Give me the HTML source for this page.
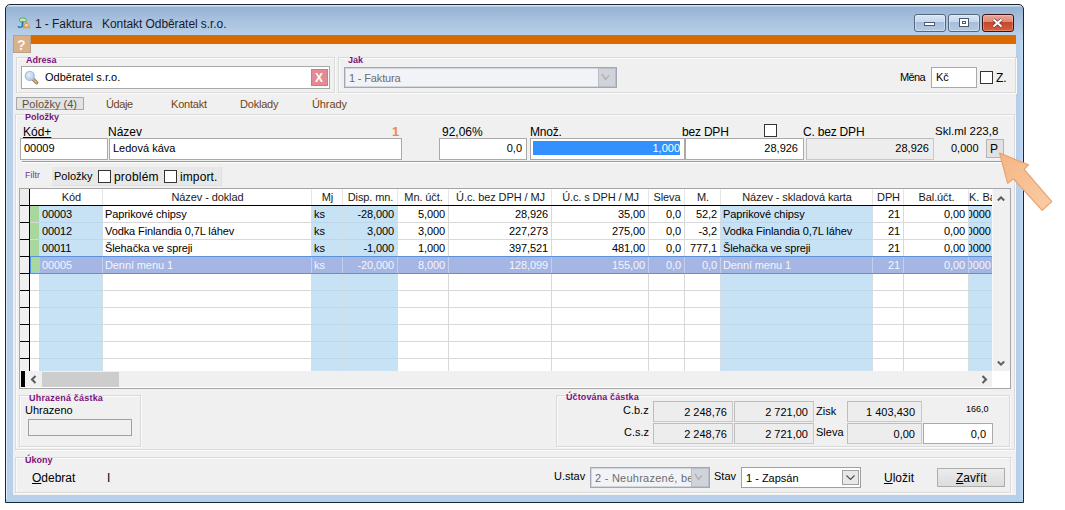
<!DOCTYPE html>
<html><head><meta charset="utf-8">
<style>
*{margin:0;padding:0;box-sizing:border-box}
html,body{width:1065px;height:510px;overflow:hidden;background:#fff;font-family:"Liberation Sans",sans-serif;color:#000;position:relative}
.a{position:absolute}
.t{position:absolute;white-space:nowrap;line-height:1}
.gb{position:absolute;border:1px solid #dadada;box-shadow:inset 1px 1px 0 #fafafa,1px 1px 0 #fafafa}
.lbl{position:absolute;white-space:nowrap;line-height:1;font-size:9px;font-weight:bold;color:#7c127c;padding:0}
.inp{position:absolute;background:#fff;border:1px solid #a9a9a9}
.sunk{position:absolute;background:#ededed;border:1px solid #bdbdbd;border-right-color:#c8c8c8;border-bottom-color:#c8c8c8}
.chk{position:absolute;width:13px;height:13px;border:1px solid #333;background:#fff}
.g{letter-spacing:-0.1px}
.f11{font-size:11px}.f12{font-size:12px}.f10{font-size:10px}.f9{font-size:9px}
</style></head><body>
<!-- window frame -->
<div class="a" style="left:5px;top:4px;width:1019px;height:499px;border:1px solid #1e2630;border-radius:5px 5px 0 0;background:linear-gradient(180deg,#d6e4f2 0px,#d6e4f2 1px,#96b3d3 2px,#a6c0de 14px,#b5cde6 28px,#b8d0ea 31px,#b9d0eb 100%)"></div>
<div class="a" style="left:6px;top:40px;width:1px;height:460px;background:linear-gradient(180deg,#d4e4f4,#e2f0fc)"></div>
<div class="a" style="left:6px;top:499px;width:1017px;height:3px;background:linear-gradient(180deg,#b4d0ee,#9ad8f6)"></div>
<div class="a" style="left:1016px;top:40px;width:7px;height:460px;background:linear-gradient(90deg,#b6cdea,#b9d2ee 70%,#c4e0f6)"></div>
<!-- title icon -->
<svg class="a" style="left:16px;top:17px" width="15" height="12" viewBox="0 0 15 12">
 <ellipse cx="6.8" cy="3" rx="3.6" ry="2.1" fill="#b4eeb0" stroke="#4f9a48" stroke-width="0.8"/>
 <path d="M5.2 4.6 L7.6 4.6 L7.2 9.2 Q6.4 11.2 2.6 10.9 L1.2 9.3 Q4.6 9.6 4.9 8.2 Z" fill="#2f6fae"/>
 <path d="M4.9 5.6 L5.8 5.6 L5.6 8.4 Q5 9.6 3.2 9.7 Z" fill="#8fd6f0"/>
 <path d="M10.4 4.4 L14 10.8 L6.8 10.8 Z" fill="#e7a03e" stroke="#d8902a" stroke-width="0.6" stroke-linejoin="round"/>
 <ellipse cx="10.5" cy="8.2" rx="1.6" ry="1.3" fill="#fbd7a8"/>
</svg>
<div class="t f12" style="left:35px;top:18px;color:#1a1a2a;letter-spacing:-0.07px">1 - Faktura &nbsp; Kontakt Odběratel s.r.o.</div>
<!-- caption buttons -->
<div class="a" style="left:914px;top:14px;width:32px;height:18px;border:1px solid #56667c;border-radius:3px;background:linear-gradient(180deg,#d9e5f3 0,#c9d9ec 42%,#a6bdd9 43%,#b4cae4 100%);box-shadow:inset 0 0 0 1px rgba(255,255,255,0.35)">
 <div class="a" style="left:9px;top:7px;width:11px;height:4px;background:#fff;border:1px solid #4a5a70"></div>
</div>
<div class="a" style="left:948px;top:14px;width:32px;height:18px;border:1px solid #56667c;border-radius:3px;background:linear-gradient(180deg,#d9e5f3 0,#c9d9ec 42%,#a6bdd9 43%,#b4cae4 100%);box-shadow:inset 0 0 0 1px rgba(255,255,255,0.35)">
 <div class="a" style="left:10px;top:3px;width:10px;height:9px;background:#fff;border:1px solid #4a5a70"><div class="a" style="left:2px;top:2px;width:4px;height:3px;border:1px solid #4a5a70"></div></div>
</div>
<div class="a" style="left:982px;top:14px;width:32px;height:18px;border:1px solid #3a1212;border-radius:3px;background:linear-gradient(180deg,#eaa898 0,#de8a78 42%,#c4452a 43%,#d4603e 100%);box-shadow:inset 0 0 0 1px rgba(255,220,210,0.35)">
 <svg class="a" style="left:8px;top:3px" width="13" height="10" viewBox="0 0 13 10"><path d="M2.5 1.5 L10.5 8.5 M10.5 1.5 L2.5 8.5" stroke="#6a3030" stroke-width="3.6"/><path d="M2.5 1.5 L10.5 8.5 M10.5 1.5 L2.5 8.5" stroke="#fff" stroke-width="2.2"/></svg>
</div>
<!-- client -->
<div class="a" style="left:13px;top:35px;width:1003px;height:460px;background:#f0f0f0"></div>
<div class="a" style="left:13px;top:35px;width:1003px;height:9px;background:#d86a00;border-top:1px solid #c07030"></div>
<div class="a" style="left:13px;top:44px;width:1003px;height:1px;background:#f6eee6"></div>
<div class="a" style="left:13px;top:35px;width:18px;height:18px;background:#d9b28c;border:1px solid #b8a088;border-top-color:#c8a070"></div>
<div class="t" style="left:17px;top:38px;font-size:14px;font-weight:bold;color:#fbf4ee">?</div>

<!-- Adresa group -->
<div class="gb" style="left:16px;top:57px;width:319px;height:36px"></div>
<div class="lbl" style="left:26px;top:56px">Adresa</div>
<div class="inp" style="left:21px;top:66px;width:309px;height:23px"></div>
<svg class="a" style="left:24px;top:70px" width="15" height="15" viewBox="0 0 15 15">
 <defs><radialGradient id="mg" cx="0.4" cy="0.4" r="0.6"><stop offset="0" stop-color="#e4f0fb"/><stop offset="1" stop-color="#b4cce6"/></radialGradient></defs>
 <path d="M9.2 9.2 L12.6 12.6" stroke="#8a7048" stroke-width="3.4" stroke-linecap="round"/>
 <path d="M9.2 9.2 L12.6 12.6" stroke="#d2b486" stroke-width="1.8" stroke-linecap="round"/>
 <circle cx="5.8" cy="5.8" r="4.6" fill="url(#mg)" stroke="#a4bcd6" stroke-width="1.1"/>
</svg>
<div class="t f11" style="left:45px;top:72px">Odběratel s.r.o.</div>
<div class="a" style="left:311px;top:69px;width:17px;height:17px;background:#e48a92;border:1px solid #d07884"></div>
<div class="t" style="left:315px;top:72px;font-size:12px;font-weight:bold;color:#fff">X</div>

<!-- Jak group -->
<div class="gb" style="left:338px;top:57px;width:678px;height:36px"></div>
<div class="lbl" style="left:348px;top:56px">Jak</div>
<div class="a" style="left:344px;top:67px;width:273px;height:21px;border:1px solid #a0a8b4;box-shadow:inset 0 0 0 1px #d2d7de;background:#f1f3f7"></div>
<div class="a" style="left:598px;top:68px;width:18px;height:19px;background:#d0d3d9;border:1px solid #b9bfc8"></div>
<svg class="a" style="left:600px;top:72px" width="12" height="10" viewBox="0 0 12 10"><path d="M2 2 L5.5 7.5 L9 3.5" stroke="#b2b2b4" stroke-width="1.4" fill="none"/></svg>
<div class="t f11" style="left:349px;top:73px;color:#6d6d6d;letter-spacing:-0.15px">1 - Faktura</div>
<div class="t f11" style="left:900px;top:72px;letter-spacing:-0.6px">Měna</div>
<div class="inp" style="left:931px;top:67px;width:46px;height:21px"></div>
<div class="t f11" style="left:936px;top:72px">Kč</div>
<div class="chk" style="left:980px;top:71px"></div>
<div class="t f12" style="left:996px;top:72px">Z.</div>

<!-- tabs -->
<div class="a" style="left:16px;top:97px;width:68px;height:13px;border:1px solid #a8a8a8;background:#e3e3e3"></div>
<div class="t f11" style="left:22px;top:99px;color:#5e5040">Položky (4)</div>
<div class="t f11" style="left:106px;top:99px;color:#6e4420;letter-spacing:-0.4px">Údaje</div>
<div class="t f11" style="left:171px;top:99px;color:#6e4420;letter-spacing:-0.2px">Kontakt</div>
<div class="t f11" style="left:240px;top:99px;color:#6e4420;letter-spacing:-0.2px">Doklady</div>
<div class="t f11" style="left:312px;top:99px;color:#6e4420;letter-spacing:-0.1px">Úhrady</div>

<!-- Polozky group -->
<div class="gb" style="left:15px;top:114px;width:1000px;height:336px"></div>
<div class="a" style="left:22px;top:161px;width:986px;height:1px;background:#9a9a9a;box-shadow:0 1px 0 #fff"></div>
<div class="lbl" style="left:25px;top:113px">Položky</div>
<div class="t f12" style="left:23px;top:126px;text-decoration:underline">Kód+</div>
<div class="t f12" style="left:108px;top:126px">Název</div>
<div class="t" style="left:392px;top:125px;font-size:13px;font-weight:bold;color:#f0884a">1</div>
<div class="t f12" style="left:442px;top:126px">92,06%</div>
<div class="t f12" style="left:530px;top:126px;letter-spacing:-0.2px">Množ.</div>
<div class="t f12" style="left:682px;top:126px;letter-spacing:-0.2px">bez DPH</div>
<div class="chk" style="left:764px;top:124px"></div>
<div class="t f12" style="left:803px;top:126px;letter-spacing:-0.2px">C. bez DPH</div>
<div class="t" style="left:935px;top:126px;font-size:11.5px;letter-spacing:0px">Skl.ml 223,8</div>
<div class="inp" style="left:20px;top:138px;width:88px;height:22px"></div>
<div class="t f11" style="left:24px;top:143px">00009</div>
<div class="inp" style="left:109px;top:138px;width:293px;height:22px"></div>
<div class="t f11" style="left:113px;top:143px">Ledová káva</div>
<div class="inp" style="left:439px;top:138px;width:88px;height:22px"></div>
<div class="t f11" style="left:439px;top:143px;width:83px;text-align:right">0,0</div>
<div class="inp" style="left:530px;top:138px;width:155px;height:22px"></div>
<div class="a" style="left:533px;top:141px;width:147px;height:14px;background:#3390ff"></div>
<div class="t f11" style="left:533px;top:143px;width:147px;text-align:right;color:#fff">1,000</div>
<div class="inp" style="left:685px;top:138px;width:119px;height:22px"></div>
<div class="t f11" style="left:685px;top:143px;width:113px;text-align:right">28,926</div>
<div class="sunk" style="left:806px;top:138px;width:128px;height:22px"></div>
<div class="t f11" style="left:806px;top:143px;width:123px;text-align:right">28,926</div>
<div class="t f11" style="left:951px;top:143px">0,000</div>
<div class="a" style="left:986px;top:139px;width:18px;height:19px;border:1px solid #b5b5b5;background:#e1e1e1"></div>
<div class="t f12" style="left:990px;top:143px">P</div>

<!-- filter -->
<div class="t" style="left:25px;top:171px;font-size:9px;color:#7a3296">Filtr</div>
<div class="a" style="left:51px;top:166px;width:171px;height:20px;background:#e8e8e8;border:1px solid #f2f2f2;border-right-color:#e0e0e0;border-bottom-color:#e0e0e0"></div>
<div class="t f11" style="left:54px;top:171px">Položky</div>
<div class="chk" style="left:98px;top:170px"></div>
<div class="t f12" style="left:114px;top:171px;letter-spacing:0.2px">problém</div>
<div class="chk" style="left:164px;top:170px"></div>
<div class="t f12" style="left:180px;top:171px;letter-spacing:0.1px">import.</div>
<div class="a" style="left:19px;top:188px;width:992px;height:201px;border:1px solid #a5a5a5;background:#fff"></div>
<div class="a" style="left:20px;top:189px;width:9px;height:16px;background:#ececec"></div>
<div class="a" style="left:39px;top:206px;width:63px;height:165px;background:#c7e2f5"></div>
<div class="a" style="left:311px;top:206px;width:31px;height:165px;background:#c7e2f5"></div>
<div class="a" style="left:342px;top:206px;width:55px;height:165px;background:#c7e2f5"></div>
<div class="a" style="left:720px;top:206px;width:152px;height:165px;background:#c7e2f5"></div>
<div class="a" style="left:968px;top:206px;width:24px;height:165px;background:#c7e2f5"></div>
<div class="a" style="left:20px;top:206px;width:9px;height:165px;background:#f0f0f0"></div>
<div class="a" style="left:30px;top:206px;width:9px;height:67px;background:#a9d89e"></div>
<div class="a" style="left:30px;top:222px;width:962px;height:1px;background:#d9d9d9"></div>
<div class="a" style="left:39px;top:222px;width:63px;height:1px;background:#bcd6ea"></div>
<div class="a" style="left:311px;top:222px;width:31px;height:1px;background:#bcd6ea"></div>
<div class="a" style="left:342px;top:222px;width:55px;height:1px;background:#bcd6ea"></div>
<div class="a" style="left:720px;top:222px;width:152px;height:1px;background:#bcd6ea"></div>
<div class="a" style="left:968px;top:222px;width:24px;height:1px;background:#bcd6ea"></div>
<div class="a" style="left:20px;top:222px;width:10px;height:1px;background:#000"></div>
<div class="a" style="left:30px;top:239px;width:962px;height:1px;background:#d9d9d9"></div>
<div class="a" style="left:39px;top:239px;width:63px;height:1px;background:#bcd6ea"></div>
<div class="a" style="left:311px;top:239px;width:31px;height:1px;background:#bcd6ea"></div>
<div class="a" style="left:342px;top:239px;width:55px;height:1px;background:#bcd6ea"></div>
<div class="a" style="left:720px;top:239px;width:152px;height:1px;background:#bcd6ea"></div>
<div class="a" style="left:968px;top:239px;width:24px;height:1px;background:#bcd6ea"></div>
<div class="a" style="left:20px;top:239px;width:10px;height:1px;background:#000"></div>
<div class="a" style="left:30px;top:256px;width:962px;height:1px;background:#d9d9d9"></div>
<div class="a" style="left:39px;top:256px;width:63px;height:1px;background:#bcd6ea"></div>
<div class="a" style="left:311px;top:256px;width:31px;height:1px;background:#bcd6ea"></div>
<div class="a" style="left:342px;top:256px;width:55px;height:1px;background:#bcd6ea"></div>
<div class="a" style="left:720px;top:256px;width:152px;height:1px;background:#bcd6ea"></div>
<div class="a" style="left:968px;top:256px;width:24px;height:1px;background:#bcd6ea"></div>
<div class="a" style="left:20px;top:256px;width:10px;height:1px;background:#000"></div>
<div class="a" style="left:30px;top:273px;width:962px;height:1px;background:#d9d9d9"></div>
<div class="a" style="left:39px;top:273px;width:63px;height:1px;background:#bcd6ea"></div>
<div class="a" style="left:311px;top:273px;width:31px;height:1px;background:#bcd6ea"></div>
<div class="a" style="left:342px;top:273px;width:55px;height:1px;background:#bcd6ea"></div>
<div class="a" style="left:720px;top:273px;width:152px;height:1px;background:#bcd6ea"></div>
<div class="a" style="left:968px;top:273px;width:24px;height:1px;background:#bcd6ea"></div>
<div class="a" style="left:20px;top:273px;width:10px;height:1px;background:#000"></div>
<div class="a" style="left:30px;top:290px;width:962px;height:1px;background:#d9d9d9"></div>
<div class="a" style="left:39px;top:290px;width:63px;height:1px;background:#bcd6ea"></div>
<div class="a" style="left:311px;top:290px;width:31px;height:1px;background:#bcd6ea"></div>
<div class="a" style="left:342px;top:290px;width:55px;height:1px;background:#bcd6ea"></div>
<div class="a" style="left:720px;top:290px;width:152px;height:1px;background:#bcd6ea"></div>
<div class="a" style="left:968px;top:290px;width:24px;height:1px;background:#bcd6ea"></div>
<div class="a" style="left:20px;top:290px;width:10px;height:1px;background:#000"></div>
<div class="a" style="left:30px;top:307px;width:962px;height:1px;background:#d9d9d9"></div>
<div class="a" style="left:39px;top:307px;width:63px;height:1px;background:#bcd6ea"></div>
<div class="a" style="left:311px;top:307px;width:31px;height:1px;background:#bcd6ea"></div>
<div class="a" style="left:342px;top:307px;width:55px;height:1px;background:#bcd6ea"></div>
<div class="a" style="left:720px;top:307px;width:152px;height:1px;background:#bcd6ea"></div>
<div class="a" style="left:968px;top:307px;width:24px;height:1px;background:#bcd6ea"></div>
<div class="a" style="left:20px;top:307px;width:10px;height:1px;background:#000"></div>
<div class="a" style="left:30px;top:324px;width:962px;height:1px;background:#d9d9d9"></div>
<div class="a" style="left:39px;top:324px;width:63px;height:1px;background:#bcd6ea"></div>
<div class="a" style="left:311px;top:324px;width:31px;height:1px;background:#bcd6ea"></div>
<div class="a" style="left:342px;top:324px;width:55px;height:1px;background:#bcd6ea"></div>
<div class="a" style="left:720px;top:324px;width:152px;height:1px;background:#bcd6ea"></div>
<div class="a" style="left:968px;top:324px;width:24px;height:1px;background:#bcd6ea"></div>
<div class="a" style="left:20px;top:324px;width:10px;height:1px;background:#000"></div>
<div class="a" style="left:30px;top:341px;width:962px;height:1px;background:#d9d9d9"></div>
<div class="a" style="left:39px;top:341px;width:63px;height:1px;background:#bcd6ea"></div>
<div class="a" style="left:311px;top:341px;width:31px;height:1px;background:#bcd6ea"></div>
<div class="a" style="left:342px;top:341px;width:55px;height:1px;background:#bcd6ea"></div>
<div class="a" style="left:720px;top:341px;width:152px;height:1px;background:#bcd6ea"></div>
<div class="a" style="left:968px;top:341px;width:24px;height:1px;background:#bcd6ea"></div>
<div class="a" style="left:20px;top:341px;width:10px;height:1px;background:#000"></div>
<div class="a" style="left:30px;top:358px;width:962px;height:1px;background:#d9d9d9"></div>
<div class="a" style="left:39px;top:358px;width:63px;height:1px;background:#bcd6ea"></div>
<div class="a" style="left:311px;top:358px;width:31px;height:1px;background:#bcd6ea"></div>
<div class="a" style="left:342px;top:358px;width:55px;height:1px;background:#bcd6ea"></div>
<div class="a" style="left:720px;top:358px;width:152px;height:1px;background:#bcd6ea"></div>
<div class="a" style="left:968px;top:358px;width:24px;height:1px;background:#bcd6ea"></div>
<div class="a" style="left:20px;top:358px;width:10px;height:1px;background:#000"></div>
<div class="a" style="left:102px;top:189px;width:1px;height:16px;background:#e6e6e6"></div>
<div class="a" style="left:102px;top:206px;width:1px;height:165px;background:#d4dde4"></div>
<div class="a" style="left:311px;top:189px;width:1px;height:16px;background:#e6e6e6"></div>
<div class="a" style="left:311px;top:206px;width:1px;height:165px;background:#d4dde4"></div>
<div class="a" style="left:342px;top:189px;width:1px;height:16px;background:#e6e6e6"></div>
<div class="a" style="left:342px;top:206px;width:1px;height:165px;background:#d4dde4"></div>
<div class="a" style="left:397px;top:189px;width:1px;height:16px;background:#e6e6e6"></div>
<div class="a" style="left:397px;top:206px;width:1px;height:165px;background:#d4dde4"></div>
<div class="a" style="left:448px;top:189px;width:1px;height:16px;background:#e6e6e6"></div>
<div class="a" style="left:448px;top:206px;width:1px;height:165px;background:#d9d9d9"></div>
<div class="a" style="left:551px;top:189px;width:1px;height:16px;background:#e6e6e6"></div>
<div class="a" style="left:551px;top:206px;width:1px;height:165px;background:#d9d9d9"></div>
<div class="a" style="left:648px;top:189px;width:1px;height:16px;background:#e6e6e6"></div>
<div class="a" style="left:648px;top:206px;width:1px;height:165px;background:#d9d9d9"></div>
<div class="a" style="left:684px;top:189px;width:1px;height:16px;background:#e6e6e6"></div>
<div class="a" style="left:684px;top:206px;width:1px;height:165px;background:#d9d9d9"></div>
<div class="a" style="left:720px;top:189px;width:1px;height:16px;background:#e6e6e6"></div>
<div class="a" style="left:720px;top:206px;width:1px;height:165px;background:#d4dde4"></div>
<div class="a" style="left:872px;top:189px;width:1px;height:16px;background:#e6e6e6"></div>
<div class="a" style="left:872px;top:206px;width:1px;height:165px;background:#d4dde4"></div>
<div class="a" style="left:903px;top:189px;width:1px;height:16px;background:#e6e6e6"></div>
<div class="a" style="left:903px;top:206px;width:1px;height:165px;background:#d9d9d9"></div>
<div class="a" style="left:968px;top:189px;width:1px;height:16px;background:#e6e6e6"></div>
<div class="a" style="left:968px;top:206px;width:1px;height:165px;background:#d4dde4"></div>
<div class="a" style="left:30px;top:256px;width:962px;height:18px;background:#a5b6e4;border-top:1px solid #5a92dc;border-bottom:1px solid #5a92dc"></div>
<div class="a" style="left:30px;top:256px;width:1px;height:18px;background:#5a92dc"></div>
<div class="a" style="left:31px;top:257px;width:9px;height:16px;background:#a9d89e;border:1px solid #90d0f0;border-right:none"></div>
<div class="a" style="left:102px;top:257px;width:1px;height:16px;background:rgba(255,255,255,0.35)"></div>
<div class="a" style="left:311px;top:257px;width:1px;height:16px;background:rgba(255,255,255,0.35)"></div>
<div class="a" style="left:342px;top:257px;width:1px;height:16px;background:rgba(255,255,255,0.35)"></div>
<div class="a" style="left:397px;top:257px;width:1px;height:16px;background:rgba(255,255,255,0.35)"></div>
<div class="a" style="left:448px;top:257px;width:1px;height:16px;background:rgba(255,255,255,0.35)"></div>
<div class="a" style="left:551px;top:257px;width:1px;height:16px;background:rgba(255,255,255,0.35)"></div>
<div class="a" style="left:648px;top:257px;width:1px;height:16px;background:rgba(255,255,255,0.35)"></div>
<div class="a" style="left:684px;top:257px;width:1px;height:16px;background:rgba(255,255,255,0.35)"></div>
<div class="a" style="left:720px;top:257px;width:1px;height:16px;background:rgba(255,255,255,0.35)"></div>
<div class="a" style="left:872px;top:257px;width:1px;height:16px;background:rgba(255,255,255,0.35)"></div>
<div class="a" style="left:903px;top:257px;width:1px;height:16px;background:rgba(255,255,255,0.35)"></div>
<div class="a" style="left:968px;top:257px;width:1px;height:16px;background:rgba(255,255,255,0.35)"></div>
<div class="a" style="left:20px;top:205px;width:972px;height:1px;background:#000"></div>
<div class="a" style="left:29px;top:189px;width:1px;height:182px;background:#000"></div>
<div class="t f11 g" style="left:40px;top:192px;width:63px;text-align:center;color:#1a1a1a">Kód</div>
<div class="t f11 g" style="left:103px;top:192px;width:209px;text-align:center;color:#1a1a1a">Název - doklad</div>
<div class="t f11 g" style="left:312px;top:192px;width:31px;text-align:center;color:#1a1a1a">Mj</div>
<div class="t f11 g" style="left:343px;top:192px;width:55px;text-align:center;color:#1a1a1a">Disp. mn.</div>
<div class="t f11 g" style="left:398px;top:192px;width:51px;text-align:center;color:#1a1a1a">Mn. účt.</div>
<div class="t f11 g" style="left:449px;top:192px;width:103px;text-align:center;color:#1a1a1a">Ú.c. bez DPH / MJ</div>
<div class="t f11 g" style="left:552px;top:192px;width:97px;text-align:center;color:#1a1a1a">Ú.c. s DPH / MJ</div>
<div class="t f11 g" style="left:649px;top:192px;width:36px;text-align:center;color:#1a1a1a">Sleva</div>
<div class="t f11 g" style="left:685px;top:192px;width:36px;text-align:center;color:#1a1a1a">M.</div>
<div class="t f11 g" style="left:721px;top:192px;width:152px;text-align:center;color:#1a1a1a">Název - skladová karta</div>
<div class="t f11 g" style="left:873px;top:192px;width:31px;text-align:center;color:#1a1a1a">DPH</div>
<div class="t f11 g" style="left:904px;top:192px;width:65px;text-align:center;color:#1a1a1a">Bal.účt.</div>
<div class="t f11" style="left:969px;top:192px;width:23px;overflow:hidden;color:#1a1a1a">K. Baa</div>
<div class="t f11 g" style="left:42px;top:209px;color:#000">00003</div>
<div class="t f11 g" style="left:105px;top:209px;color:#000">Paprikové chipsy</div>
<div class="t f11 g" style="left:314px;top:209px;color:#000">ks</div>
<div class="t f11 g" style="left:342px;top:209px;width:52px;text-align:right;color:#000">-28,000</div>
<div class="t f11 g" style="left:397px;top:209px;width:48px;text-align:right;color:#000">5,000</div>
<div class="t f11 g" style="left:448px;top:209px;width:100px;text-align:right;color:#000">28,926</div>
<div class="t f11 g" style="left:551px;top:209px;width:94px;text-align:right;color:#000">35,00</div>
<div class="t f11 g" style="left:648px;top:209px;width:33px;text-align:right;color:#000">0,0</div>
<div class="t f11 g" style="left:684px;top:209px;width:33px;text-align:right;color:#000">52,2</div>
<div class="t f11 g" style="left:723px;top:209px;color:#000">Paprikové chipsy</div>
<div class="t f11 g" style="left:872px;top:209px;width:28px;text-align:right;color:#000">21</div>
<div class="t f11 g" style="left:903px;top:209px;width:62px;text-align:right;color:#000">0,00</div>
<div class="a" style="left:969px;top:207px;width:22px;height:15px;overflow:hidden"><div class="t f11" style="right:0;top:2px;color:#000">0,0000</div></div>
<div class="t f11 g" style="left:42px;top:226px;color:#000">00012</div>
<div class="t f11 g" style="left:105px;top:226px;color:#000">Vodka Finlandia 0,7L láhev</div>
<div class="t f11 g" style="left:314px;top:226px;color:#000">ks</div>
<div class="t f11 g" style="left:342px;top:226px;width:52px;text-align:right;color:#000">3,000</div>
<div class="t f11 g" style="left:397px;top:226px;width:48px;text-align:right;color:#000">3,000</div>
<div class="t f11 g" style="left:448px;top:226px;width:100px;text-align:right;color:#000">227,273</div>
<div class="t f11 g" style="left:551px;top:226px;width:94px;text-align:right;color:#000">275,00</div>
<div class="t f11 g" style="left:648px;top:226px;width:33px;text-align:right;color:#000">0,0</div>
<div class="t f11 g" style="left:684px;top:226px;width:33px;text-align:right;color:#000">-3,2</div>
<div class="t f11 g" style="left:723px;top:226px;color:#000">Vodka Finlandia 0,7L láhev</div>
<div class="t f11 g" style="left:872px;top:226px;width:28px;text-align:right;color:#000">21</div>
<div class="t f11 g" style="left:903px;top:226px;width:62px;text-align:right;color:#000">0,00</div>
<div class="a" style="left:969px;top:224px;width:22px;height:15px;overflow:hidden"><div class="t f11" style="right:0;top:2px;color:#000">0,0000</div></div>
<div class="t f11 g" style="left:42px;top:243px;color:#000">00011</div>
<div class="t f11 g" style="left:105px;top:243px;color:#000">Šlehačka ve spreji</div>
<div class="t f11 g" style="left:314px;top:243px;color:#000">ks</div>
<div class="t f11 g" style="left:342px;top:243px;width:52px;text-align:right;color:#000">-1,000</div>
<div class="t f11 g" style="left:397px;top:243px;width:48px;text-align:right;color:#000">1,000</div>
<div class="t f11 g" style="left:448px;top:243px;width:100px;text-align:right;color:#000">397,521</div>
<div class="t f11 g" style="left:551px;top:243px;width:94px;text-align:right;color:#000">481,00</div>
<div class="t f11 g" style="left:648px;top:243px;width:33px;text-align:right;color:#000">0,0</div>
<div class="t f11 g" style="left:684px;top:243px;width:33px;text-align:right;color:#000">777,1</div>
<div class="t f11 g" style="left:723px;top:243px;color:#000">Šlehačka ve spreji</div>
<div class="t f11 g" style="left:872px;top:243px;width:28px;text-align:right;color:#000">21</div>
<div class="t f11 g" style="left:903px;top:243px;width:62px;text-align:right;color:#000">0,00</div>
<div class="a" style="left:969px;top:241px;width:22px;height:15px;overflow:hidden"><div class="t f11" style="right:0;top:2px;color:#000">0,0000</div></div>
<div class="t f11 g" style="left:42px;top:260px;color:#f2f5fc">00005</div>
<div class="t f11 g" style="left:105px;top:260px;color:#f2f5fc">Denní menu 1</div>
<div class="t f11 g" style="left:314px;top:260px;color:#f2f5fc">ks</div>
<div class="t f11 g" style="left:342px;top:260px;width:52px;text-align:right;color:#f2f5fc">-20,000</div>
<div class="t f11 g" style="left:397px;top:260px;width:48px;text-align:right;color:#f2f5fc">8,000</div>
<div class="t f11 g" style="left:448px;top:260px;width:100px;text-align:right;color:#f2f5fc">128,099</div>
<div class="t f11 g" style="left:551px;top:260px;width:94px;text-align:right;color:#f2f5fc">155,00</div>
<div class="t f11 g" style="left:648px;top:260px;width:33px;text-align:right;color:#f2f5fc">0,0</div>
<div class="t f11 g" style="left:684px;top:260px;width:33px;text-align:right;color:#f2f5fc">0,0</div>
<div class="t f11 g" style="left:723px;top:260px;color:#f2f5fc">Denní menu 1</div>
<div class="t f11 g" style="left:872px;top:260px;width:28px;text-align:right;color:#f2f5fc">21</div>
<div class="t f11 g" style="left:903px;top:260px;width:62px;text-align:right;color:#f2f5fc">0,00</div>
<div class="a" style="left:969px;top:258px;width:22px;height:15px;overflow:hidden"><div class="t f11" style="right:0;top:2px;color:#f2f5fc">0,0000</div></div>
<div class="a" style="left:992px;top:189px;width:18px;height:182px;background:#f0f0f0;border-left:1px solid #fafafa"></div>
<svg class="a" style="left:996px;top:195px" width="10" height="7" viewBox="0 0 10 7"><path d="M1.8 5.5 L5 2.3 L8.2 5.5" stroke="#5a5a5a" stroke-width="2" fill="none"/></svg>
<svg class="a" style="left:996px;top:360px" width="10" height="7" viewBox="0 0 10 7"><path d="M1.8 1.5 L5 4.7 L8.2 1.5" stroke="#606060" stroke-width="2" fill="none"/></svg>
<div class="a" style="left:20px;top:371px;width:972px;height:17px;background:#f0f0f0;border-bottom:1px solid #fff"></div>
<div class="a" style="left:21px;top:371px;width:4px;height:16px;background:#000"></div>
<div class="a" style="left:42px;top:372px;width:77px;height:15px;background:#cdcdcd"></div>
<svg class="a" style="left:29px;top:375px" width="8" height="9" viewBox="0 0 8 9"><path d="M6.5 1 L3 4.5 L6.5 8" stroke="#5a5a5a" stroke-width="2" fill="none"/></svg>
<svg class="a" style="left:981px;top:375px" width="8" height="9" viewBox="0 0 8 9"><path d="M1.5 1 L5 4.5 L1.5 8" stroke="#5a5a5a" stroke-width="2" fill="none"/></svg>
<div class="a" style="left:992px;top:371px;width:18px;height:17px;background:#fff"></div><!-- panel line below grid -->
<!-- Uhrazena castka -->
<div class="gb" style="left:19px;top:395px;width:122px;height:52px"></div>
<div class="lbl" style="left:29px;top:394px;letter-spacing:0.2px">Uhrazená částka</div>
<div class="t f11" style="left:25px;top:405px">Uhrazeno</div>
<div class="a" style="left:28px;top:419px;width:104px;height:17px;border:1px solid #a0a0a0;background:#f0f0f0"></div>
<!-- Uctovana castka -->
<div class="gb" style="left:556px;top:395px;width:454px;height:52px"></div>
<div class="lbl" style="left:566px;top:393px;letter-spacing:0.12px">Účtována částka</div>
<div class="t f11" style="left:623px;top:405px">C.b.z</div>
<div class="t f11" style="left:624px;top:427px">C.s.z</div>
<div class="sunk" style="left:653px;top:401px;width:80px;height:21px"></div>
<div class="t f11" style="left:653px;top:407px;width:74px;text-align:right">2 248,76</div>
<div class="sunk" style="left:734px;top:401px;width:80px;height:21px"></div>
<div class="t f11" style="left:734px;top:407px;width:74px;text-align:right">2 721,00</div>
<div class="sunk" style="left:653px;top:423px;width:80px;height:21px"></div>
<div class="t f11" style="left:653px;top:429px;width:74px;text-align:right">2 248,76</div>
<div class="sunk" style="left:734px;top:423px;width:80px;height:21px"></div>
<div class="t f11" style="left:734px;top:429px;width:74px;text-align:right">2 721,00</div>
<div class="t f11" style="left:816px;top:406px">Zisk</div>
<div class="t f11" style="left:816px;top:427px">Sleva</div>
<div class="sunk" style="left:847px;top:401px;width:75px;height:21px"></div>
<div class="t f11" style="left:847px;top:407px;width:68px;text-align:right">1 403,430</div>
<div class="sunk" style="left:847px;top:423px;width:75px;height:21px"></div>
<div class="t f11" style="left:847px;top:429px;width:68px;text-align:right">0,00</div>
<div class="t" style="left:966px;top:405px;font-size:9px">166,0</div>
<div class="inp" style="left:923px;top:423px;width:70px;height:21px"></div>
<div class="t f11" style="left:923px;top:429px;width:63px;text-align:right">0,0</div>
<!-- Ukony -->
<div class="gb" style="left:15px;top:457px;width:996px;height:36px"></div>
<div class="lbl" style="left:25px;top:456px">Úkony</div>
<div class="t f12" style="left:32px;top:472px"><span style="text-decoration:underline">O</span>debrat</div>
<div class="t f12" style="left:107px;top:472px">I</div>
<div class="t f11" style="left:554px;top:471px">U.stav</div>
<div class="a" style="left:590px;top:467px;width:120px;height:21px;border:1px solid #a0a8b4;box-shadow:inset 0 0 0 1px #d2d7de;background:#f1f3f7"></div>
<div class="a" style="left:691px;top:468px;width:18px;height:19px;background:#d0d3d9;border:1px solid #b9bfc8"></div>
<svg class="a" style="left:693px;top:472px" width="12" height="10" viewBox="0 0 12 10"><path d="M2 2 L5.5 7.5 L9 3.5" stroke="#b2b2b4" stroke-width="1.4" fill="none"/></svg>
<div class="t f11" style="left:595px;top:473px;width:96px;overflow:hidden;color:#6d6d6d;letter-spacing:0.25px">2 - Neuhrazené, be:</div>
<div class="t f11" style="left:714px;top:471px">Stav</div>
<div class="inp" style="left:741px;top:467px;width:120px;height:21px;border-color:#a0a0a0"></div>
<div class="a" style="left:842px;top:470px;width:17px;height:15px;border:1px solid #a0a0a0;background:#e8e8e8"></div>
<svg class="a" style="left:845px;top:474px" width="11" height="8" viewBox="0 0 11 8"><path d="M1.5 1.5 L5.5 5.5 L9.5 1.5" stroke="#505050" stroke-width="1.2" fill="none"/></svg>
<div class="t f11" style="left:746px;top:473px">1 - Zapsán</div>
<div class="t f12" style="left:884px;top:472px"><span style="text-decoration:underline">U</span>ložit</div>
<div class="a" style="left:937px;top:468px;width:68px;height:19px;border:1px solid #adadad;background:linear-gradient(180deg,#ececec,#dcdcdc)"></div>
<div class="t f12" style="left:956px;top:472px"><span style="text-decoration:underline">Z</span>avřít</div>
<!-- arrow -->
<svg class="a" style="left:990px;top:145px" width="75" height="75" viewBox="0 0 75 75">
 <defs><linearGradient id="ag" x1="0" y1="0" x2="1" y2="1"><stop offset="0" stop-color="#f5b684"/><stop offset="1" stop-color="#facca6"/></linearGradient></defs>
 <path d="M9.6 8.1 L38.5 19.9 L34.1 24.3 L61.8 56.6 L52.2 65.4 L23.5 33.8 L17.6 38.2 Z" fill="url(#ag)" stroke="#e6a270" stroke-width="1.2" stroke-linejoin="round"/>
</svg>
</body></html>
